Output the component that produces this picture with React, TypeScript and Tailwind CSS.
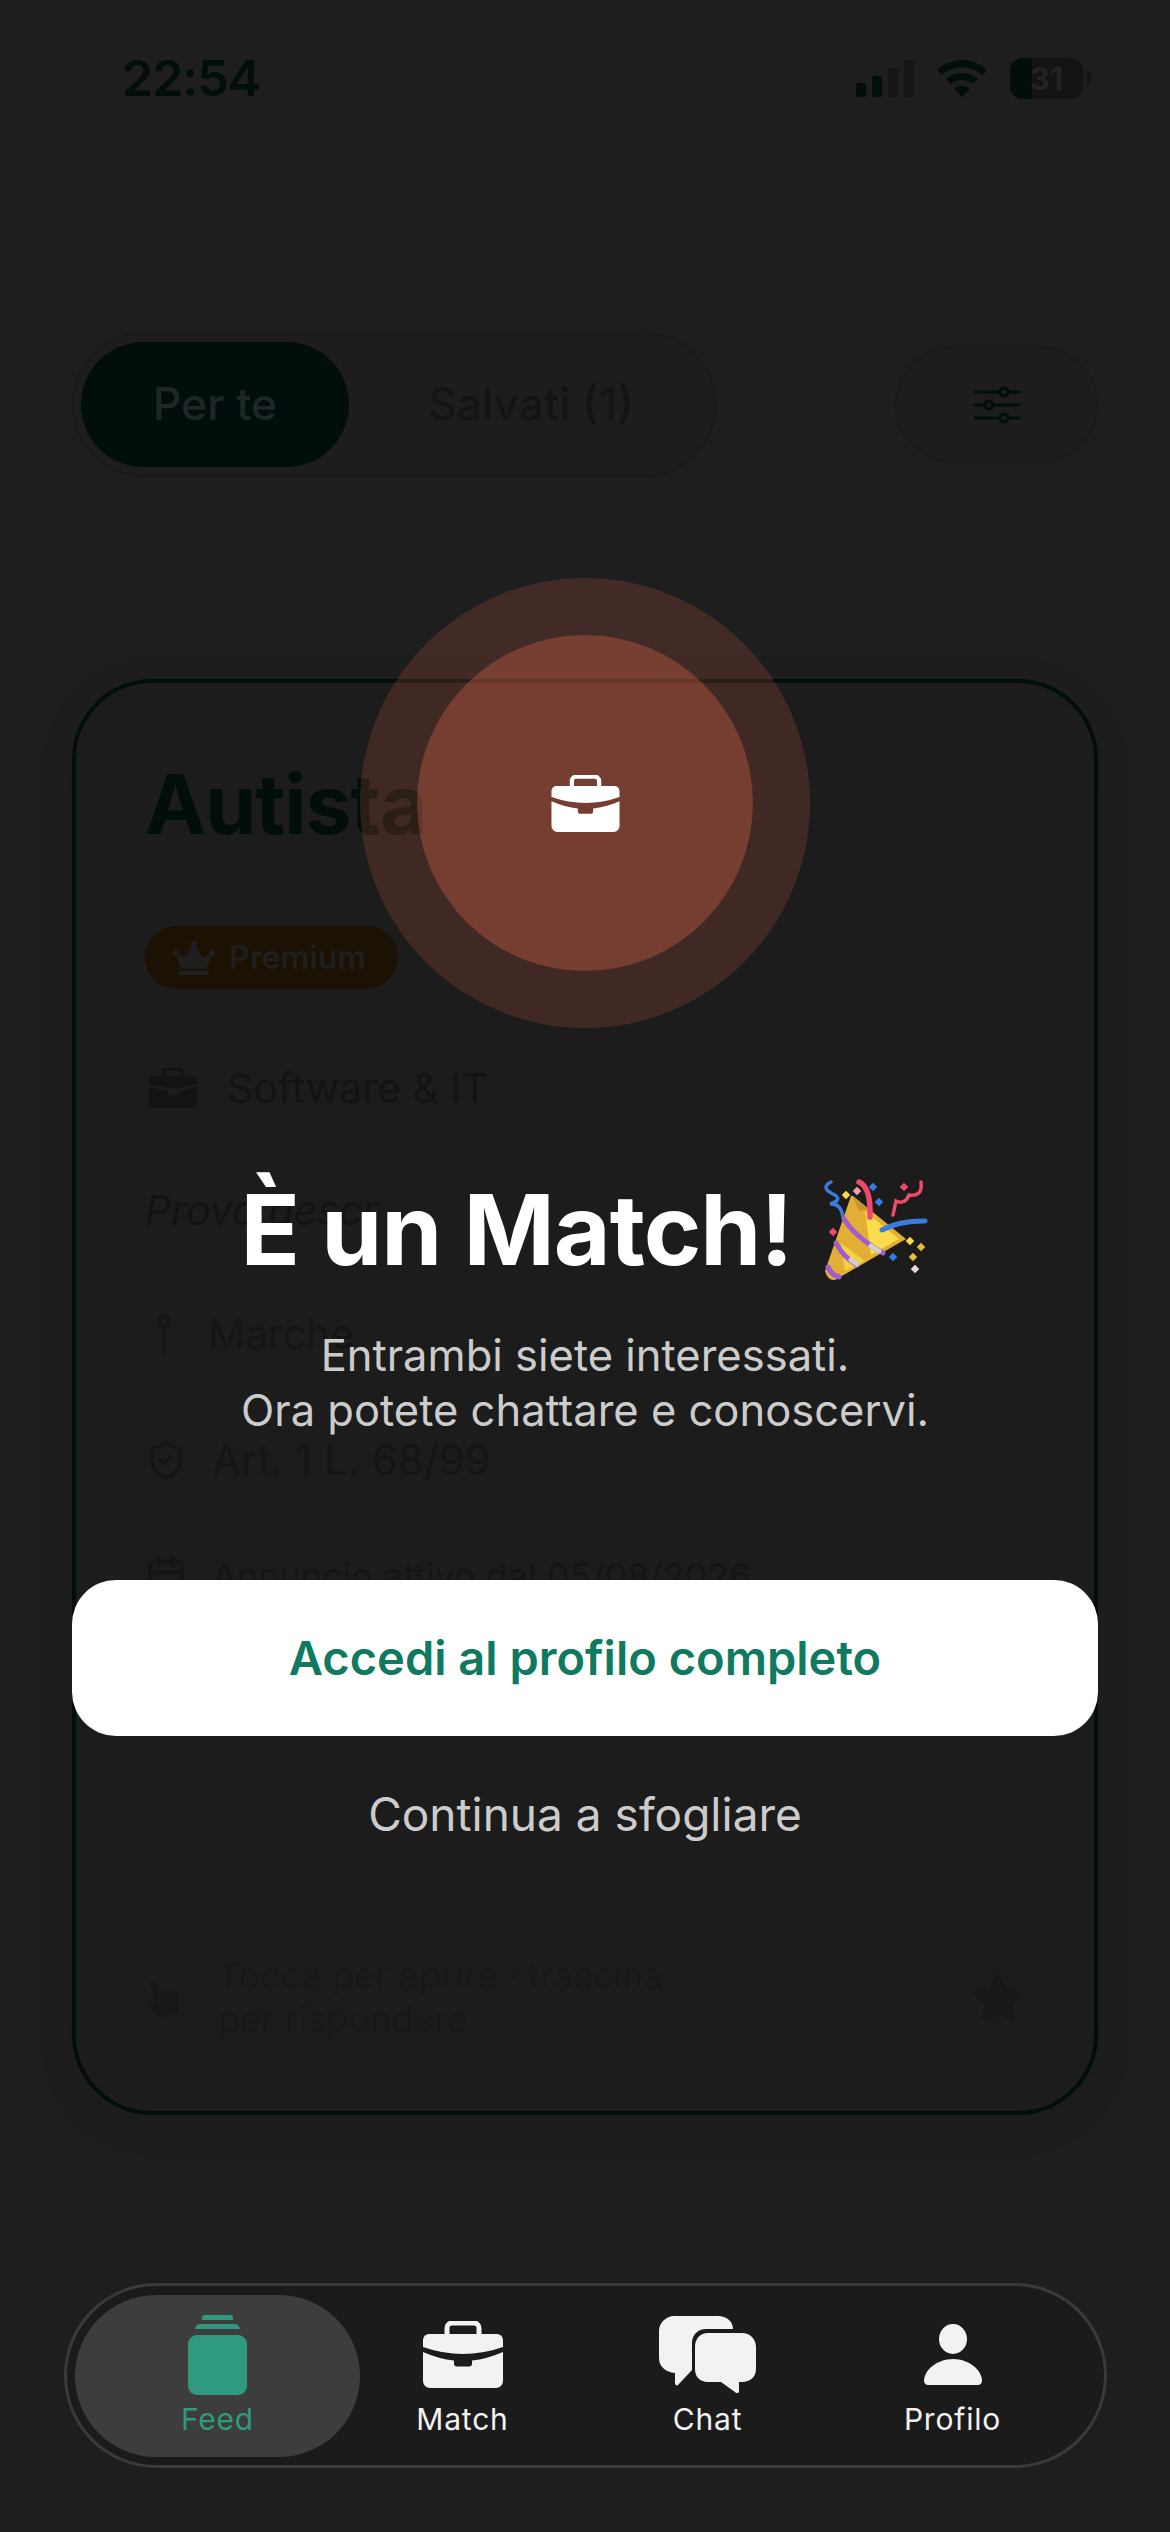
import { Calendar, ShieldCheck } from 'lucide-react';
import { FaCrown, FaHandPointer, FaStar } from 'react-icons/fa';

const sans = 'font-["Inter",sans-serif]';

function Briefcase({ className }: { className?: string }) {
  return (
    <svg viewBox="0 0 80 67" className={className} fill="currentColor">
      <path d="M24 13V7a5 5 0 0 1 5-5h22a5 5 0 0 1 5 5v6" fill="none" stroke="currentColor" strokeWidth="5" />
      <path d="M6 13h68a6 6 0 0 1 6 6v7Q60 33 40 33Q20 33 0 26v-7a6 6 0 0 1 6-6z" />
      <path d="M0 31Q16 38 31 39.5v3a3 3 0 0 0 3 3h12a3 3 0 0 0 3-3v-3Q64 38 80 31V60a7 7 0 0 1-7 7H7a7 7 0 0 1-7-7z" />
    </svg>
  );
}

function StatusBar() {
  return (
    <div className="flex h-[100px] items-center justify-between pl-[122px] pr-[79px] pt-[56px]">
      <span className={`${sans} text-[50px] font-semibold leading-none tracking-[-1px] text-[#010e0b]`}>22:54</span>
      <div className="flex items-center">
        <div className="flex h-[37px] items-end gap-[6px]">
          <div className="h-[14px] w-[10px] rounded-[3px] bg-[#010e0b]" />
          <div className="h-[21px] w-[10px] rounded-[3px] bg-[#010e0b]" />
          <div className="h-[29px] w-[10px] rounded-[3px] bg-[#151515]" />
          <div className="h-[37px] w-[10px] rounded-[3px] bg-[#151515]" />
        </div>
        <svg viewBox="0 0 50 37" className="ml-[23px] h-[37px] w-[50px] text-[#010e0b]" fill="currentColor">
          <path d="M25 0C15.5 0 7 3.800 0 10l4.500 5C10 10 17 7.200 25 7.200S40 10 45.500 15L50 10C43 3.800 34.500 0 25 0z" />
          <path d="M25 13c-6 0-11.500 2.300-15.800 6l4.700 5c3-2.500 6.800-4 11.100-4s8.100 1.500 11.100 4l4.700-5C36.500 15.300 31 13 25 13z" />
          <path d="M25 26c-3 0-5.600 1-7.700 2.800L25 37l7.700-8.200C30.600 27 28 26 25 26z" />
        </svg>
        <div className="relative ml-[23px] flex h-[41px] w-[73px] items-center justify-center overflow-hidden rounded-[13px] bg-[#141414]">
          <div className="absolute inset-y-0 left-0 w-[22px] bg-[#010e0b]" />
          <span className={`${sans} relative text-[31px] font-bold leading-none text-[#232323]`}>31</span>
        </div>
        <div className="ml-[4px] h-[14px] w-[4px] rounded-r-full bg-[#151515]" />
      </div>
    </div>
  );
}

function Controls() {
  return (
    <div className="mt-[232px] flex items-center justify-between px-[72px]">
      <div className="flex h-[145px] w-[644px] items-center rounded-full border-2 border-[#1a1a1a] bg-[#1d1d1d] pl-[7px]">
        <div className={`${sans} flex h-[125px] w-[268px] items-center justify-center rounded-full bg-[#010e0b] text-[44.5px] font-medium text-[#1f2725]`}>
          Per te
        </div>
        <div className={`${sans} ml-[79px] text-[44.5px] font-medium text-[#141414]`}>Salvati (1)</div>
      </div>
      <div className="flex h-[117px] w-[203px] items-center justify-center rounded-full border-2 border-[#1a1a1a] bg-[#1d1d1d]">
        <svg viewBox="0 0 46 38" className="h-[38px] w-[46px] text-[#010e0b]" fill="none" stroke="currentColor" strokeWidth="3">
          <path d="M0 6h46M0 19h46M0 32h46" />
          <circle cx="30" cy="6" r="4" fill="#1d1d1d" />
          <circle cx="15" cy="19" r="4" fill="#1d1d1d" />
          <circle cx="30" cy="32" r="4" fill="#1d1d1d" />
        </svg>
      </div>
    </div>
  );
}

function Card() {
  return (
    <div className="mx-[72px] mt-[202px] flex h-[1436px] flex-col rounded-[80px] border-4 border-[#010e0b] bg-[#1c1c1c] pl-[69px] pr-[72px] shadow-[0_10px_40px_rgba(0,0,0,0.08)]">
      <div className={`${sans} mt-[72px] text-[82px] font-bold leading-[100px] tracking-[-1px] text-[#010e0b]`}>Autista</div>
      <div className="mt-[71px] flex h-[63px] w-[253px] items-center rounded-full bg-[#1b1203] pl-[27px]">
        <FaCrown className="h-[34px] w-[44px] text-[#1f1f1f]" />
        <span className={`${sans} ml-[13px] text-[32px] font-semibold text-[#1f1f1f]`}>Premium</span>
      </div>
      <div className="mt-[79px] flex h-[40px] items-center pl-[4px] text-[#121313]">
        <Briefcase className="h-[40px] w-[48px]" />
        <span className={`${sans} ml-[30px] text-[41px] leading-none`}>Software & IT</span>
      </div>
      <div className={`${sans} mt-[77px] text-[41px] italic leading-[50px] text-[#121313]`}>Prova descr</div>
      <div className="mt-[79px] flex h-[41px] items-center pl-[12px] text-[#151515]">
        <svg viewBox="0 0 14 41" className="h-[41px] w-[14px]" fill="none" stroke="currentColor">
          <circle cx="7" cy="7" r="5" strokeWidth="4" />
          <path d="M7 13v28" strokeWidth="2.500" />
        </svg>
        <span className={`${sans} ml-[37px] text-[41px] leading-none`}>Marche</span>
      </div>
      <div className="mt-[84px] flex h-[41px] items-center text-[#151515]">
        <ShieldCheck className="h-[48px] w-[42px] shrink-0" strokeWidth={1.800} />
        <span className={`${sans} ml-[25px] text-[42px] leading-none`}>Art. 1 L. 68/99</span>
      </div>
      <div className="mt-[75px] flex h-[41px] items-center text-[#151515]">
        <Calendar className="h-[48px] w-[42px] shrink-0" strokeWidth={2.500} />
        <span className={`${sans} ml-[25px] text-[36px] leading-none`}>Annuncio attivo dal 05/08/2026</span>
      </div>
      <div className="mt-auto mb-[70px] flex items-center text-[#171717]">
        <FaHandPointer className="ml-[1px] h-[40px] w-[32px] -rotate-12" />
        <div className={`${sans} ml-[40px] text-[36px] leading-[43px] text-[#191919]`}>
          Tocca per aprire · trascina
          <br />
          per rispondere
        </div>
        <FaStar className="ml-auto -mr-[2px] h-[46px] w-[52px] text-[#181818]" />
      </div>
    </div>
  );
}

const confetti: [number, number, string][] = [
  [53, 46, '#fbdc4c'],
  [64, 42, '#f4a0b0'],
  [80, 38, '#3a7be0'],
  [86, 53, '#3a7be0'],
  [111, 38, '#ef4a6c'],
  [40, 83, '#ef4a6c'],
  [117, 92, '#fbdc4c'],
  [128, 98, '#e9b93a'],
  [100, 108, '#3a7be0'],
  [120, 108, '#e9b93a'],
  [122, 120, '#f0d8d8'],
];

function PartyPopper() {
  return (
    <svg viewBox="30 28 106 106" className="h-[106px] w-[106px] shrink-0" fill="none" strokeLinecap="round">
      <path d="M38 33Q28 38 38 44Q52 50 37 55Q48 54 50 68" stroke="#3a7be0" strokeWidth="3.500" />
      <path d="M58 47L60 47L113 90L42 131Q35 132 32 122z" fill="#e3ae36" />
      <path d="M72 62L106 90L78 106z" fill="#fbdc4c" />
      <path d="M48 94L72 112L52 122z" fill="#f5cf45" />
      <path d="M60 48L76 60L66 62z" fill="#c8922e" />
      <path d="M51 70Q62 88 90 104M43 94Q50 108 64 116M35 118Q38 126 46 128" stroke="#a05cd0" strokeWidth="5" />
      <path d="M78 97L86 102M58 111L64 115" stroke="#d0d0d0" strokeWidth="5" />
      <path d="M66 33Q78 38 77 68" stroke="#ef4a6c" strokeWidth="5.500" />
      <path d="M128 33Q130 48 116 46Q112 56 103 52L100 66" stroke="#ef4a6c" strokeWidth="3.500" />
      <path d="M89 81Q105 72 132 72" stroke="#3a7be0" strokeWidth="5" />
      {confetti.map(([x, y, color]) => (
        <rect key={`${x}-${y}`} x={x - 3} y={y - 3} width="6" height="6" fill={color} transform={`rotate(45 ${x} ${y})`} />
      ))}
    </svg>
  );
}

function MatchModal() {
  return (
    <div className="absolute inset-0 flex flex-col items-center px-[72px] pt-[578px]">
      <div className="flex h-[450px] w-[450px] items-center justify-center rounded-full bg-[rgba(232,105,78,0.18)]">
        <div className="flex h-[336px] w-[336px] items-center justify-center rounded-full bg-[rgba(232,105,78,0.32)]">
          <Briefcase className="h-[57px] w-[69px] text-white" />
        </div>
      </div>
      <div className={`${sans} mt-[142px] flex h-[120px] items-center text-[98px] font-bold leading-none tracking-[-1px] text-white`}>
        <span>È un Match!</span>
        <span className="ml-[31px]">
          <PartyPopper />
        </span>
      </div>
      <p className={`${sans} mt-[38px] text-center text-[43.5px] leading-[55px] text-[#cccccc]`}>
        Entrambi siete interessati.
        <br />
        Ora potete chattare e conoscervi.
      </p>
      <button className={`${sans} mt-[142px] flex h-[156px] w-full items-center justify-center rounded-[44px] bg-white text-[47px] font-semibold text-[#0f7a5f]`}>
        Accedi al profilo completo
      </button>
      <button className={`${sans} mt-[44px] text-[46px] text-[#cccccc]`}>Continua a sfogliare</button>
    </div>
  );
}

function TabItem({ label, children }: { label: string; children: React.ReactNode }) {
  return (
    <div className="flex h-[162px] w-[245px] flex-col items-center pt-[20px] text-[#f2f2f2]">
      <div className="flex h-[80px] items-center justify-center">{children}</div>
      <span className={`${sans} mt-[6px] text-[30px] leading-[36px] tracking-[0.8px]`}>{label}</span>
    </div>
  );
}

function TabBar() {
  return (
    <div className="absolute left-[64px] top-[2283px] flex h-[185px] w-[1043px] items-center rounded-full border-[3px] border-[#3a3a3a] bg-[#1b1b1b] pl-[8px]">
      <div className="-mr-[20px] flex h-[162px] w-[285px] flex-col items-center rounded-full bg-[#3d3d3d] pt-[20px] text-[#2f9a7e]">
        <svg viewBox="0 0 59 80" className="h-[80px] w-[59px]" fill="currentColor">
          <path d="M14 5V3a3 3 0 0 1 3-3h25a3 3 0 0 1 3 3v2z" />
          <path d="M7 14a6 6 0 0 1 6-5h33a6 6 0 0 1 6 5z" />
          <rect y="20" width="59" height="60" rx="9" />
        </svg>
        <span className={`${sans} mt-[6px] text-[30px] leading-[36px] tracking-[0.8px]`}>Feed</span>
      </div>
      <TabItem label="Match">
        <Briefcase className="h-[67px] w-[80px]" />
      </TabItem>
      <TabItem label="Chat">
        <svg viewBox="0 0 97 77" className="h-[77px] w-[97px]" fill="currentColor">
          <path d="M15 0h44c8 0 15 5 15 13H47c-8 0-14 6-14 14v27l-14 15c-1 1-3 0-3-2V57C7 56 0 51 0 42V15C0 7 7 0 15 0z" />
          <path d="M49 17h34c8 0 14 6 14 14v22c0 8-6 13-14 13h-3v9c0 2-2 3-4 1L62 66H49c-8 0-13-5-13-13V31c0-8 5-14 13-14z" />
        </svg>
      </TabItem>
      <TabItem label="Profilo">
        <svg viewBox="0 0 58 61" className="h-[61px] w-[58px]" fill="currentColor">
          <ellipse cx="29" cy="15" rx="14" ry="15" />
          <path d="M29 35c16 0 29 11 29 22 0 2-2 4-4 4H4c-2 0-4-2-4-4 0-11 13-22 29-22z" />
        </svg>
      </TabItem>
    </div>
  );
}

export default function App() {
  return (
    <div className="relative h-[2532px] w-[1170px] overflow-hidden bg-[#1e1e1e]">
      <StatusBar />
      <Controls />
      <Card />
      <MatchModal />
      <TabBar />
    </div>
  );
}
